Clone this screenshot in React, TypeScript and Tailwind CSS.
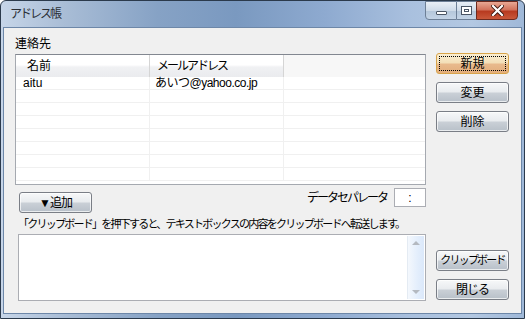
import type { ReactNode } from 'react'

const font = { fontFamily: '"Liberation Sans", "Noto Sans CJK JP", sans-serif' }

const VistaButton = (props: { children: ReactNode, primary?: boolean, className?: string, textClass?: string }): JSX.Element => {
  const { children, primary = false, className = '', textClass = 'text-[12px]' } = props
  if (primary) {
    return (
      <div className={`relative h-[21px] w-[73px] shrink-0 rounded-[3px] border border-[#d8a44a] bg-[linear-gradient(#fbefd2_0%,#f3dfb8_45%,#e8b98c_55%,#e3ae7c_100%)] p-[2px] ${className}`}>
        <div className={`flex h-full w-full items-center justify-center border border-dotted border-black leading-none text-black ${textClass}`}>
          {children}
        </div>
      </div>
    )
  }
  return (
    <div className={`flex h-[21px] w-[73px] shrink-0 items-center justify-center whitespace-nowrap rounded-[3px] border border-[#7a7e86] bg-[linear-gradient(#f7f8f9_0%,#e9ecef_45%,#c9cfd6_55%,#b8c0c9_100%)] leading-none text-black shadow-[inset_0_0_0_1px_rgba(255,255,255,0.7)] ${textClass} ${className}`}>
      {children}
    </div>
  )
}

const CaptionButtons = (): JSX.Element => (
  <div className="flex h-[20px] self-start">
    <div className="flex h-[19px] w-[32px] items-center justify-center rounded-bl-[4px] border border-[#6d7f96] bg-[linear-gradient(#e9eff6_0%,#cfdbe8_50%,#b4c6da_51%,#c4d4e6_100%)]">
      <div className="mt-[4px] h-[4px] w-[11px] rounded-[1px] border border-[#4a5564] bg-white" />
    </div>
    <div className="flex h-[19px] w-[19px] items-center justify-center border-y border-[#6d7f96] bg-[linear-gradient(#e9eff6_0%,#cfdbe8_50%,#b4c6da_51%,#c4d4e6_100%)]">
      <div className="flex h-[9px] w-[11px] items-center justify-center border border-[#4a5564] bg-white">
        <div className="h-[3px] w-[5px] border border-[#4a5564]" />
      </div>
    </div>
    <div className="flex h-[19px] w-[42px] items-center justify-center rounded-br-[4px] border border-[#6d2a1e] bg-[linear-gradient(#e8a894_0%,#d2735c_45%,#b83a20_55%,#c9583a_100%)]">
      <svg width="13" height="11" viewBox="0 0 13 11">
        <path d="M2 1 L11 10 M11 1 L2 10" stroke="#3b1710" strokeWidth="4" strokeLinecap="square" />
        <path d="M2 1 L11 10 M11 1 L2 10" stroke="#ffffff" strokeWidth="2.2" strokeLinecap="square" />
      </svg>
    </div>
  </div>
)

const rows = [
  { name: 'aitu', mail: 'あいつ@yahoo.co.jp' },
  { name: '', mail: '' },
  { name: '', mail: '' },
  { name: '', mail: '' },
  { name: '', mail: '' },
  { name: '', mail: '' },
  { name: '', mail: '' },
  { name: '', mail: '' }
]

const ContactList = (): JSX.Element => (
  <div className="h-[131px] w-[411px] overflow-hidden border border-[#a5a9b0] border-t-[#828790] bg-white">
    <div className="flex h-[22px] bg-[linear-gradient(#ffffff_0%,#ffffff_45%,#f0f1f3_55%,#eaebee_100%)] text-[12px] tracking-[-2px]">
      <div className="flex w-[134px] items-center border-r border-[#d5d5d5] pl-[11px] tracking-normal">名前</div>
      <div className="flex w-[134px] items-center border-r border-[#d5d5d5] pl-[7px]">メールアドレス</div>
      <div className="flex-1 bg-[#f7f7f7]" />
    </div>
    {rows.map((row, i) => (
      <div key={i} className="flex h-[13px] border-b border-[#f0f0f0] text-[12px] leading-[12px]">
        <div className="w-[134px] border-r border-[#f0f0f0] pl-[7px]">{row.name}</div>
        <div className="w-[134px] whitespace-nowrap border-r border-[#f0f0f0] pl-[5px] tracking-[-0.5px]">{row.mail}</div>
        <div className="flex-1" />
      </div>
    ))}
  </div>
)

const ScrollBar = (): JSX.Element => (
  <div className="flex h-full w-[17px] flex-col items-center justify-between border-l border-[#e4ebf3] bg-[linear-gradient(90deg,#f4f8fd_0%,#e3eefc_60%,#dbe8fa_100%)] py-[5px]">
    <div className="h-0 w-0 border-x-[4px] border-b-[4px] border-x-transparent border-b-[#b4b9c0]" />
    <div className="h-0 w-0 border-x-[4px] border-t-[4px] border-x-transparent border-t-[#b4b9c0]" />
  </div>
)

const App = (): JSX.Element => {
  return (
    <div className="h-[319px] w-[525px] overflow-hidden text-black" style={font}>
      <div className="flex h-full w-full flex-col rounded-t-[6px] border border-[#2b3a4c] bg-[linear-gradient(90deg,#c6d5e8_0%,#a9bdd6_12%,#86a2c5_30%,#7a99c0_45%,#8eaad0_62%,#a9c0de_78%,#b3c8e2_90%,#9fb8d8_100%)]">
        <div className="flex h-[26px] items-start justify-between pl-[9px] pr-[6px]">
          <div className="mt-[6px] text-[12px] leading-[14px] tracking-[-2px] text-[#2a2f36]">アドレス帳</div>
          <CaptionButtons />
        </div>
        <div className="mx-[2px] mb-[4px] flex flex-1 border border-[#6d87a8] bg-[#f0f0f0]">
          <div className="flex w-[432px] shrink-0 flex-col pl-[11px] pt-[8px]">
            <div className="h-[16px] text-[12px] leading-[16px]">連絡先</div>
            <div className="mt-[2px]">
              <ContactList />
            </div>
            <div className="mt-[3px] flex w-[411px] items-start justify-between">
              <VistaButton className="ml-[4px] mt-[4px]" textClass="text-[12px] tracking-[-1px]">▼追加</VistaButton>
              <div className="flex items-center gap-[7px]">
                <span className="text-[12px] tracking-[-2px]">データセパレータ</span>
                <div className="flex h-[19px] w-[32px] items-center justify-center border border-[#abadb3] bg-white text-[12px]">:</div>
              </div>
            </div>
            <div className="ml-[3px] mt-[3px] h-[16px] whitespace-nowrap text-[11px] leading-[16px] tracking-[-1.75px]">「クリップボード」を押下すると、テキストボックスの内容をクリップボードへ転送します。</div>
            <div className="ml-[3px] mt-[2px] flex h-[67px] w-[408px] justify-end border border-[#abadb3] bg-white p-[1px]">
              <ScrollBar />
            </div>
          </div>
          <div className="flex w-[73px] shrink-0 flex-col pb-[13px] pt-[25px]">
            <div className="flex flex-col gap-[8px]">
              <VistaButton primary>新規</VistaButton>
              <VistaButton>変更</VistaButton>
              <VistaButton>削除</VistaButton>
            </div>
            <div className="mt-auto flex flex-col gap-[8px]">
              <VistaButton textClass="text-[11px] tracking-[-1.8px]">クリップボード</VistaButton>
              <VistaButton textClass="text-[12px] tracking-[-1px]">閉じる</VistaButton>
            </div>
          </div>
        </div>
      </div>
    </div>
  )
}

export default App
